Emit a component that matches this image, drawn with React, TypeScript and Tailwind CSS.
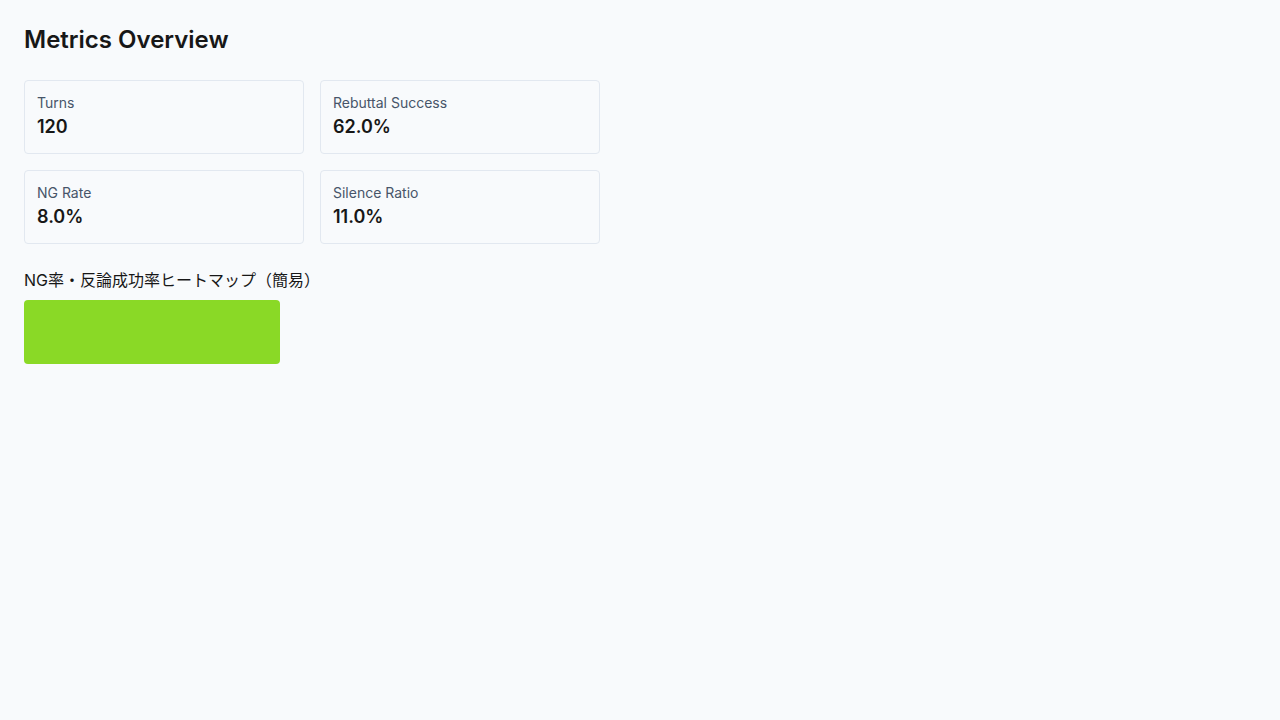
import React from "react";

const metrics = [
  { label: "Turns", value: "120" },
  { label: "Rebuttal Success", value: "62.0%" },
  { label: "NG Rate", value: "8.0%" },
  { label: "Silence Ratio", value: "11.0%" },
];

export default function App() {
  return (
    <div
      className="min-h-screen bg-[#f8fafc] p-6 text-[#171717]"
      style={{ fontFamily: "Inter, 'Noto Sans CJK JP', sans-serif" }}
    >
      <h1 className="text-2xl font-semibold leading-8">Metrics Overview</h1>
      <div className="mt-6 grid w-[576px] grid-cols-2 gap-4">
        {metrics.map((m) => (
          <div key={m.label} className="rounded border border-[#e2e8f0] p-3">
            <div className="text-sm leading-5 text-[#475569]">{m.label}</div>
            <div className="text-lg font-semibold leading-7">{m.value}</div>
          </div>
        ))}
      </div>
      <div className="mt-6 text-base leading-6">NG率・反論成功率ヒートマップ（簡易）</div>
      <div className="mt-2 h-16 w-64 rounded bg-[#8ad926]" />
    </div>
  );
}
